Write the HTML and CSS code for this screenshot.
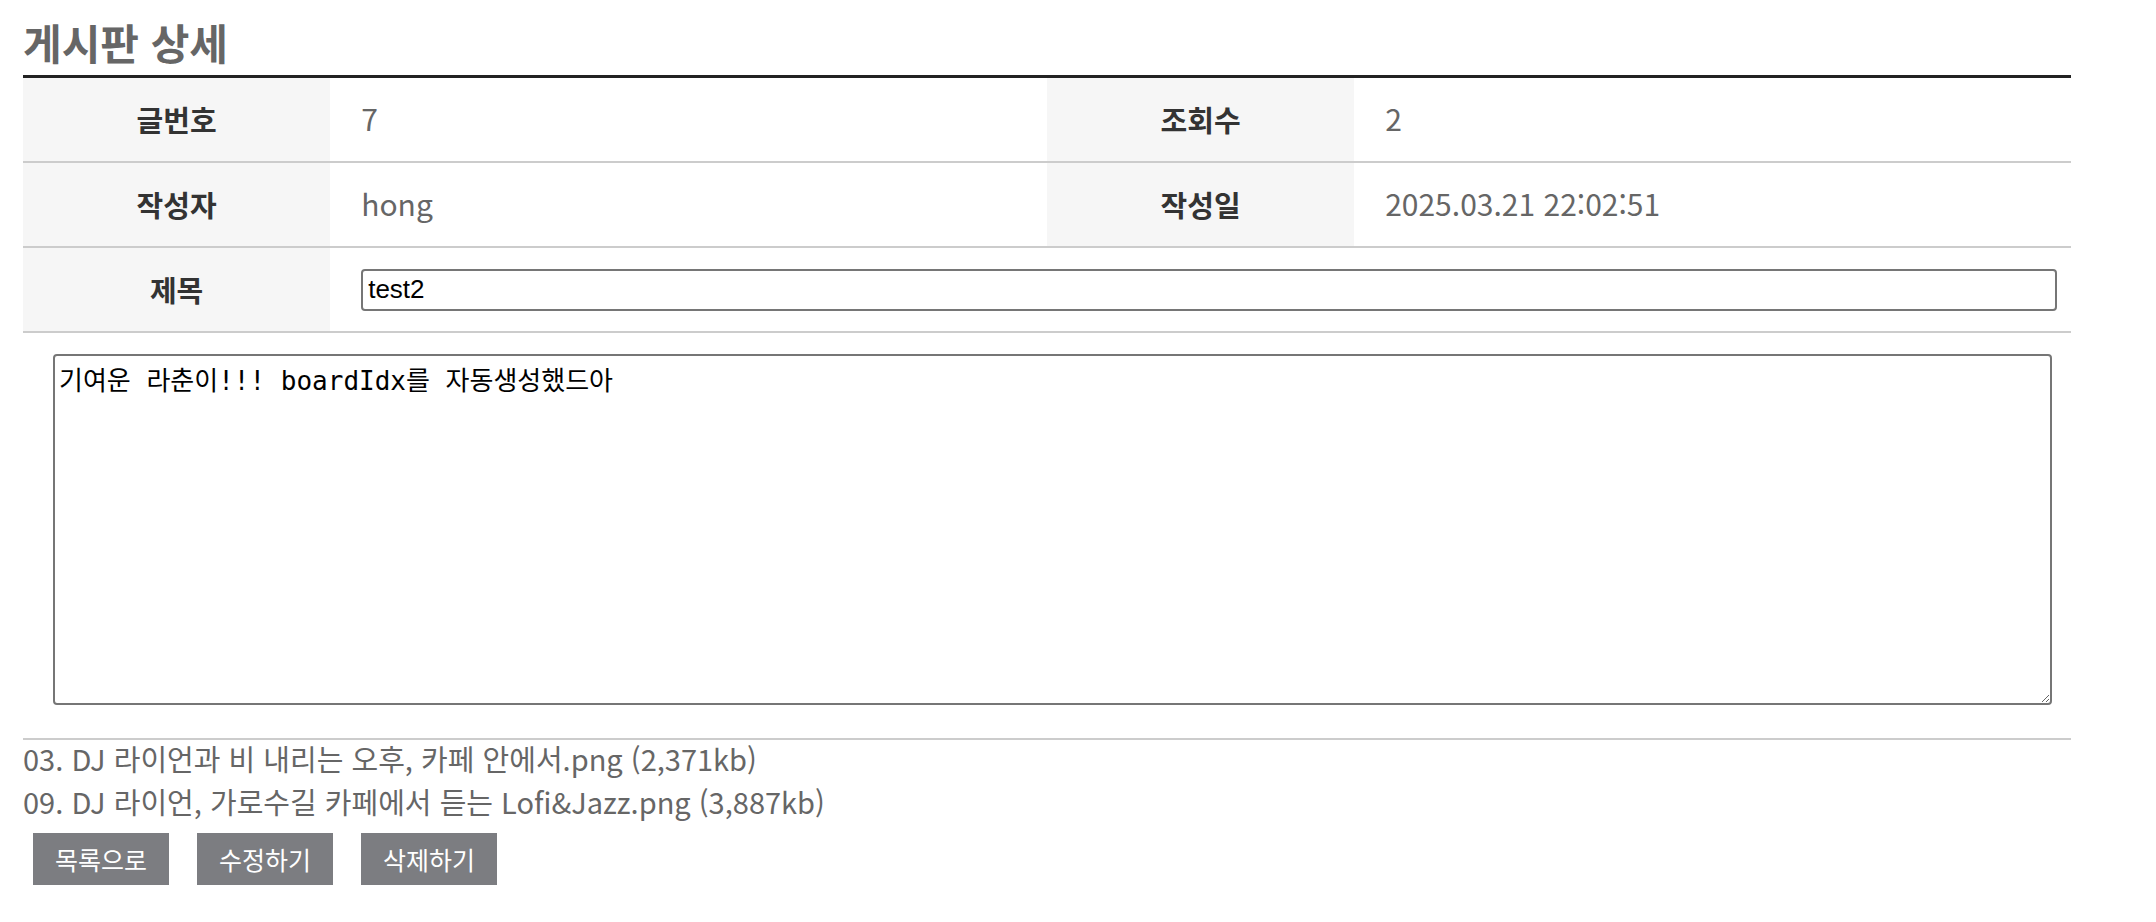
FILE: index.html
```
<!DOCTYPE html>
<html lang="ko">
<head>
    <meta charset="UTF-8">
    <meta name="viewport" content="width=device-width, initial-scale=1.0">
    <title>게시판 상세</title>
    <link rel="stylesheet" href="styles.css">
</head>
<body>
    <div class="container">
        <h2>게시판 상세</h2>

        <table class="board-view">
            <colgroup>
                <col style="width: 15%">
                <col style="width: 35%">
                <col style="width: 15%">
                <col style="width: 35%">
            </colgroup>
            <tbody>
                <tr>
                    <th>글번호</th>
                    <td>7</td>
                    <th>조회수</th>
                    <td>2</td>
                </tr>
                <tr>
                    <th>작성자</th>
                    <td>hong</td>
                    <th>작성일</th>
                    <td>2025.03.21 22:02:51</td>
                </tr>
                <tr>
                    <th>제목</th>
                    <td colspan="3" class="title-cell">
                        <input type="text" id="title" value="test2">
                    </td>
                </tr>
            </tbody>
        </table>

        <div class="contents">
            <textarea id="contents">기여운 라춘이!!! boardIdx를 자동생성했드아</textarea>
        </div>

        <div class="file-list">
            <a href="#">03. DJ 라이언과 비 내리는 오후, 카페 안에서.png (2,371kb)</a>
            <a href="#">09. DJ 라이언, 가로수길 카페에서 듣는 Lofi&amp;Jazz.png (3,887kb)</a>
        </div>

        <div class="btn-area">
            <button type="button" class="btn">목록으로</button>
            <button type="button" class="btn">수정하기</button>
            <button type="button" class="btn">삭제하기</button>
        </div>
    </div>
</body>
</html>
```

FILE: styles.css
```
body {
    margin: 0;
    font-family: "Noto Sans CJK KR", sans-serif;
    background: #fff;
}

.container {
    width: 2048px;
    margin-left: 23px;
}

h2 {
    margin: 12px 0 3px;
    font-size: 42px;
    line-height: 60px;
    font-weight: 700;
    color: #666;
}

.board-view {
    width: 100%;
    table-layout: fixed;
    border-collapse: separate;
    border-spacing: 0;
    border-top: 3px solid #222;
}

.board-view th,
.board-view td {
    border-bottom: 2px solid #ccc;
    line-height: 43px;
}

.board-view th {
    padding: 20px 0;
    background-color: #f6f6f6;
    color: #333;
    font-size: 29px;
    font-weight: 700;
    text-align: center;
}

.board-view td {
    padding: 19px 0 21px 31px;
    color: #666;
    font-size: 30px;
    font-weight: 400;
    text-align: left;
}

.board-view td.title-cell {
    padding: 0 14px 0 31px;
    vertical-align: middle;
}

.title-cell input {
    display: block;
    width: 100%;
    height: 42px;
    box-sizing: border-box;
    padding: 4px 5px;
    border: 2px solid #767676;
    border-radius: 4px;
    font-family: "Liberation Sans", Arial, sans-serif;
    font-size: 26px;
    color: #000;
}

.contents {
    padding: 21px 19px 0 30px;
}

.contents textarea {
    display: block;
    width: 100%;
    height: 351px;
    box-sizing: border-box;
    padding: 4px;
    border: 2px solid #767676;
    border-radius: 4px;
    font-family: "DejaVu Sans Mono", "Noto Sans CJK KR", monospace;
    font-size: 26px;
    color: #000;
    resize: vertical;
}

.file-list {
    margin-top: 33px;
    padding-top: 7px;
    border-top: 2px solid #ccc;
    display: flex;
    flex-direction: column;
    gap: 21px;
}

.file-list a {
    display: block;
    line-height: 22px;
    font-size: 29px;
    color: #666;
    text-decoration: none;
}

.btn-area {
    margin-top: 21px;
    padding-left: 10px;
    display: flex;
    gap: 28px;
}

.btn {
    height: 52px;
    padding: 0 22px;
    border: none;
    background: #7c7d81;
    color: #fff;
    font-family: "Noto Sans CJK KR", sans-serif;
    font-size: 25px;
    cursor: pointer;
}
```
